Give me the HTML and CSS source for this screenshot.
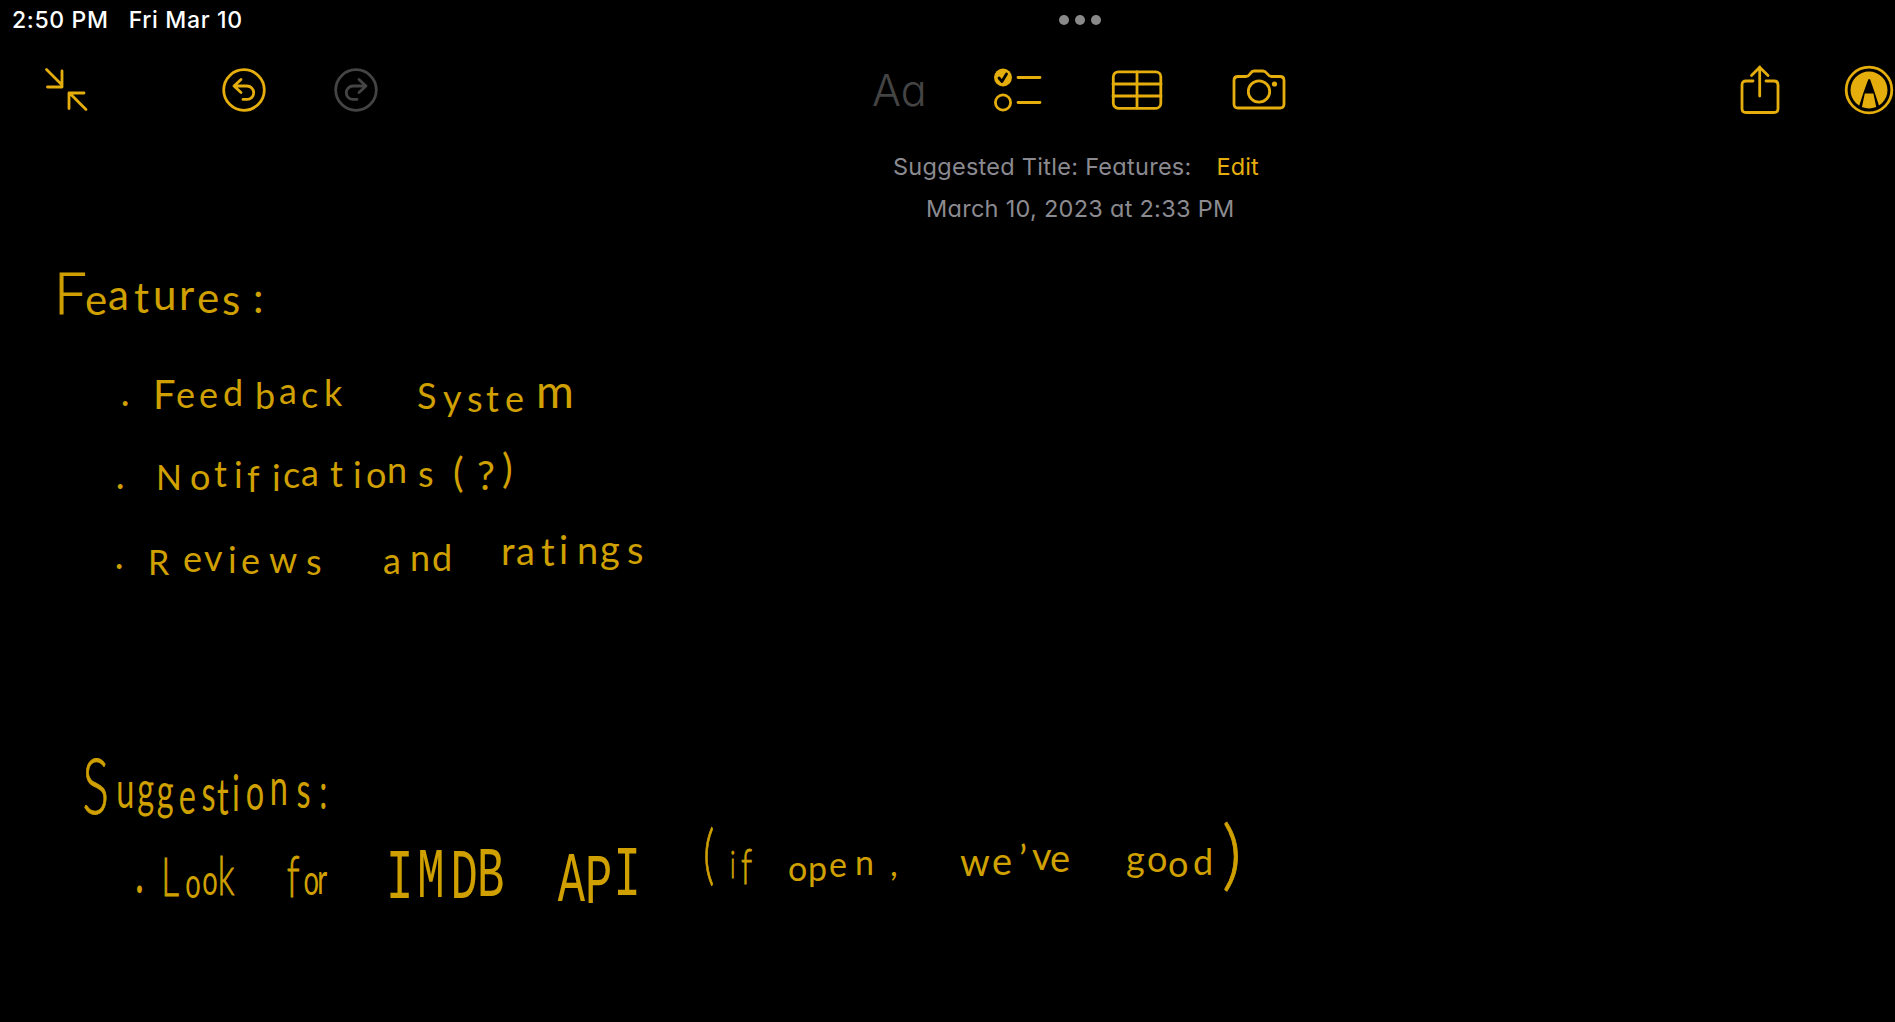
FILE: index.html
```html
<!DOCTYPE html>
<html lang="en">
<head>
<meta charset="utf-8">
<title>Notes</title>
<link rel="stylesheet" href="styles.css">
</head>
<body>
<div class="status">
  <div class="clock"><span class="time">2:50 PM</span><span class="date">Fri Mar 10</span></div>
  <div class="dots"><i></i><i></i><i></i></div>
</div>
<nav class="toolbar">
  <div class="tools left">
    <svg class="icon collapse" width="44" height="46" viewBox="0 0 44 46"><path d="M2.500 2.500 18 18M18 4v16H3.500M42 42.500 26 26.500M40 26H25v15.500"/></svg>
    <svg class="icon" width="46" height="46" viewBox="0 0 46 46"><circle cx="23" cy="23" r="20.300"/><path d="m20 12.500-7 6.500 7 6.500M13.500 19H26a6.700 6.700 0 0 1 0 13.400h-4"/></svg>
    <svg class="icon redo" width="46" height="46" viewBox="0 0 46 46"><circle cx="23" cy="23" r="20.300"/><path d="m26 12.500 7 6.500-7 6.500M32.500 19H20a6.700 6.700 0 0 0 0 13.400h4"/></svg>
  </div>
  <div class="tools middle">
    <span class="format">Aa</span>
    <svg class="icon" width="50" height="46" viewBox="0 0 50 46"><circle class="solid" cx="10" cy="10.500" r="9"/><path class="tick" d="m6 11 3 3.500L13.500 7"/><circle cx="10" cy="35.500" r="7.600"/><path d="M25 10.500h22M25 35.500h22"/></svg>
    <svg class="icon" width="52" height="42" viewBox="0 0 52 42"><rect x="2.300" y="2.800" width="47.500" height="36.500" rx="5"/><path d="M2 15h48M2 27h48M26 3v36"/></svg>
    <svg class="icon camera" width="54" height="42" viewBox="0 0 54 42"><path d="M6 7.500h8c2 0 3-1 4-2.500C19.500 2.800 20 2 22 2h9c2 0 3 1 4.500 3 1 1.500 2 2.500 4 2.500H48q4 0 4 4V35q0 4-4 4H6q-4 0-4-4V11.500q0-4 4-4Z"/><circle cx="27" cy="22.500" r="10.700"/><circle class="solid" cx="42.500" cy="15" r="2.600"/></svg>
  </div>
  <div class="tools right">
    <svg class="icon" width="40" height="50" viewBox="0 0 40 50"><path d="M13 16H6q-4 0-4 4v23.500q0 4 4 4h28q4 0 4-4V20q0-4-4-4h-8M19.700 31V2M11.500 10.500l8.200-8.200 8.300 8.200"/></svg>
    <svg class="icon" width="50" height="50" viewBox="0 0 50 50"><circle cx="25" cy="25" r="22.800"/><circle class="solid" cx="25" cy="25" r="18.500"/><path class="nib" d="m24.300 14.300 1.800 0 4.700 13.500 4.200 13-2.600 2-3-14.300h-8.600l-3 14.300-2.600-2 4.200-13Z"/></svg>
  </div>
</nav>
<main>
  <div class="meta">
    <p class="suggested"><span class="title">Suggested Title: Features:</span><span class="edit">Edit</span></p>
    <p class="stamp">March 10, 2023 at 2:33 PM</p>
  </div>
  <svg class="ink" width="1895" height="782" viewBox="0 240 1895 782">
    <text class="w42" x="54 85 108 134 153 179 197 222 253" y="314 315 310 313 310 310 313 315 313"><tspan class="w58">F</tspan>eatures:</text>

    <text class="w32" x="121" y="413">·</text>
    <text class="w36" x="153 176 199 223 255 279 301 324" y="409 408 408 406 409 404 408 406"><tspan class="w40">F</tspan>eedback</text>
    <text class="w36" x="417 443 467 486 505 536" y="409 411 412 412 412 408">Syste<tspan class="w46">m</tspan></text>

    <text class="w32" x="116" y="496">·</text>
    <text class="w36" x="156 190 214 234 247 272 283 301 330 353 366 387 418 453 477 502" y="490 490 487 488 492 491 488 486 487 488 488 483 487 487 490 483"><tspan class="w34">N</tspan>otifications<tspan class="w40">(?)</tspan></text>

    <text class="w32" x="115" y="576">·</text>
    <text class="w36" x="148 183 204 228 241 269 306" y="575 572 571 573 574 573 575"><tspan class="w34">R</tspan>eviews</text>
    <text class="w36" x="383 410 432" y="574 571 571">and</text>
    <text class="w38" x="501 516 541 559 577 600 627" y="565 565 566 564 564 563 564">ratings</text>

    <text class="w50 tall" x="127 179 211 241 275 310 334 357 378 415 456 491" y="814 808 807 809 814 811 815 811 810 805 808 809"><tspan class="w76">S</tspan>uggestions:</text>
    <text class="w50 tall" x="208" y="904">·</text>
    <text class="w42 tall" x="248 285 311 335" y="896 898 895 895"><tspan class="w54">L</tspan>oo<tspan class="w54">k</tspan></text>
    <text class="w42 tall" x="441 467 488" y="897 895 894"><tspan class="w58">f</tspan>or</text>
    <text class="caps tall" x="594 642 693 734" y="898 897 898 896">IMDB</text>
    <text class="caps tall" x="858 900 944" y="901 903 895">API</text>
    <text class="w66 tall" x="1082 1123 1140" y="877 878 884">(<tspan class="w38">i</tspan><tspan class="w50">f</tspan></text>
    <text class="w34" x="788 808 829 855 890" y="881 881 877 875 876">open,</text>
    <text class="w38" x="960 992 1019 1032 1050" y="876 875 873 870 872">we’ve</text>
    <text class="w36" x="1126 1147 1168 1193 1222" y="872 872 877 875 881">good<tspan class="w76">)</tspan></text>
  </svg>
</main>
</body>
</html>
```
FILE: styles.css
```css
* { box-sizing: border-box; }
body {
  margin: 0;
  width: 1895px;
  height: 1022px;
  overflow: hidden;
  background: #000;
  color: #fff;
  font-family: Inter, "Liberation Sans", sans-serif;
}
.status {
  height: 40px;
  display: grid;
  grid-template-columns: 1047px 42px;
  align-items: center;
  padding-left: 12px;
}
.clock {
  display: flex;
  gap: 20px;
  font-size: 23px;
  font-weight: 450;
  line-height: 28px;
  letter-spacing: 0.65px;
}
.dots { display: flex; gap: 6px; width: 42px; }
.dots i { width: 10px; height: 10px; border-radius: 50%; background: #8a8a8a; }
.toolbar {
  height: 100px;
  display: grid;
  grid-template-columns: 870px 1fr auto;
}
.tools { display: flex; align-items: center; height: 100px; }
.left { padding-left: 44px; }
.left .collapse { margin-right: 133px; }
.left .redo { margin-left: 66px; stroke: #444; }
.middle .icon { flex: none; }
.format {
  width: 123px;
  font-size: 43px;
  font-weight: 350;
  color: #444;
  line-height: 50px;
  padding-left: 2px;
  font-feature-settings: "cv11";
}
.middle .icon + .icon { margin-left: 68px; }
.middle .icon + .camera { margin-left: 69px; }
.right { gap: 64px; padding-right: 1px; }
.icon {
  display: block;
  fill: none;
  stroke: #e5ae0d;
  stroke-width: 2.8;
  stroke-linecap: round;
  stroke-linejoin: round;
}
.solid { fill: #e5ae0d; stroke: none; }
.tick { stroke: #000; }
.nib { fill: #000; stroke: none; }
.meta {
  height: 100px;
  padding-top: 6px;
  color: #8b8a90;
  font-size: 23.500px;
  line-height: 42px;
  letter-spacing: 0.28px;
  font-feature-settings: "cv11";
}
.meta p { margin: 0; }
.suggested { display: flex; gap: 25px; padding-left: 893px; }
.edit { color: #e5ae0d; letter-spacing: 0.1px; }
.stamp { padding-left: 926px; }
.ink {
  display: block;
  fill: #cfa000;
  font-family: Lato, "Liberation Sans", sans-serif;
}
.ink text { font-kerning: none; font-variant-ligatures: none; white-space: pre; }
.tall { transform: scaleX(0.65); transform-origin: 0 0; }
.w32 { font-size: 32px; }
.w34 { font-size: 34px; }
.w36 { font-size: 36px; }
.w38 { font-size: 38px; }
.w40 { font-size: 40px; }
.w42 { font-size: 42px; }
.w46 { font-size: 46px; }
.w50 { font-size: 50px; }
.w54, .w58, .w66, .w76 { font-weight: 300; stroke: #cfa000; stroke-width: 0.9; }
.w54 { font-size: 54px; }
.w58 { font-size: 58px; }
.w66 { font-size: 66px; }
.w76 { font-size: 76px; }
.caps { font-family: "Liberation Mono", monospace; font-size: 70px; }
```
